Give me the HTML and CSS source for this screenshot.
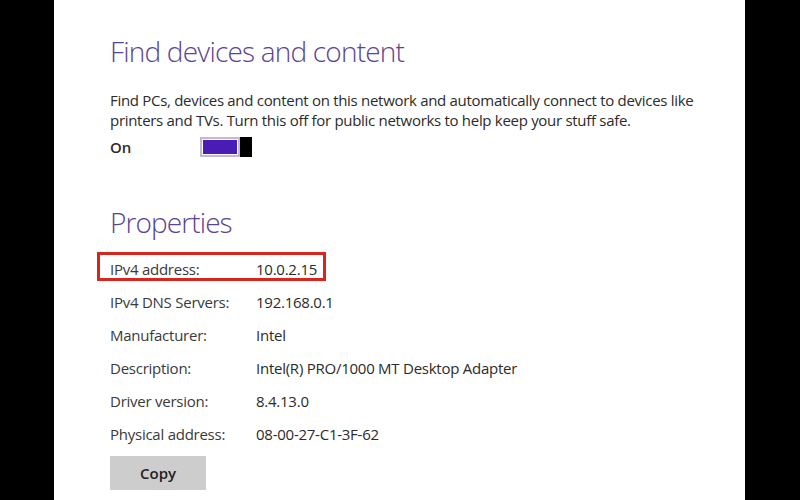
FILE: index.html
```html
<!DOCTYPE html>
<html lang="en">
<head>
    <meta charset="UTF-8">
    <meta name="viewport" content="width=device-width, initial-scale=1.0">
    <title>Network settings</title>
    <link rel="stylesheet" href="styles.css">
</head>
<body>
    <main class="panel">
        <section class="find">
            <h1>Find devices and content</h1>
            <p>Find PCs, devices and content on this network and automatically connect to devices like<br>
               printers and TVs. Turn this off for public networks to help keep your stuff safe.</p>
            <div class="switch-row">
                <span class="switch-label">On</span>
                <div class="toggle">
                    <span class="track"></span>
                    <span class="thumb"></span>
                </div>
            </div>
        </section>

        <section class="properties">
            <h1>Properties</h1>
            <div class="prop highlight">
                <span class="name">IPv4 address:</span>
                <span class="value">10.0.2.15</span>
            </div>
            <div class="prop">
                <span class="name">IPv4 DNS Servers:</span>
                <span class="value">192.168.0.1</span>
            </div>
            <div class="prop">
                <span class="name">Manufacturer:</span>
                <span class="value">Intel</span>
            </div>
            <div class="prop">
                <span class="name">Description:</span>
                <span class="value">Intel(R) PRO/1000 MT Desktop Adapter</span>
            </div>
            <div class="prop">
                <span class="name">Driver version:</span>
                <span class="value">8.4.13.0</span>
            </div>
            <div class="prop">
                <span class="name">Physical address:</span>
                <span class="value">08-00-27-C1-3F-62</span>
            </div>
            <button type="button" class="copy">Copy</button>
        </section>
    </main>
</body>
</html>
```

FILE: styles.css
```css
body {
    margin: 0;
    padding: 0;
    background-color: #000;
    font-family: "Open Sans", "Noto Sans", Arial, sans-serif;
    color: #2b2b2b;
}

.panel {
    margin-left: 54px;
    width: 635px;
    height: 500px;
    padding: 0 0 0 56px;
    background-color: #fff;
    overflow: hidden;
}

h1 {
    margin: 0;
    font-size: 28px;
    font-weight: 300;
    line-height: 36px;
    letter-spacing: -0.8px;
    color: #5a4592;
}

.find {
    padding-top: 33px;
}

.find p {
    margin: 21px 0 0 0;
    font-size: 15px;
    line-height: 20px;
    letter-spacing: -0.3px;
    white-space: nowrap;
}

.switch-row {
    display: flex;
    align-items: center;
    height: 20px;
    margin-top: 7px;
}

.switch-label {
    width: 90px;
    font-size: 15px;
    font-weight: 600;
    line-height: 20px;
}

.toggle {
    display: flex;
    width: 52px;
    height: 20px;
}

.track {
    flex: 1;
    border: 2px solid #c2b6dc;
    padding: 1px;
    background-color: #4a1cb6;
    background-clip: content-box;
}

.thumb {
    width: 12px;
    background-color: #000;
}

.properties {
    margin-top: 47px;
}

.properties h1 {
    margin-bottom: 13px;
    letter-spacing: -0.9px;
}

.prop {
    display: flex;
    height: 33px;
    font-size: 15px;
    line-height: 33px;
    letter-spacing: -0.25px;
}

.name {
    width: 146px;
    color: #3a3a3a;
}

.highlight {
    position: relative;
}

.highlight::after {
    content: "";
    position: absolute;
    left: -13px;
    top: -1px;
    width: 223px;
    height: 23px;
    border: 3px solid #d7261e;
}

.copy {
    display: block;
    width: 96px;
    height: 34px;
    margin-top: 5px;
    border: none;
    background-color: #cdcdcd;
    font-family: "Open Sans", "Noto Sans", Arial, sans-serif;
    font-size: 15px;
    font-weight: 600;
    color: #222;
    padding: 0;
}
```
